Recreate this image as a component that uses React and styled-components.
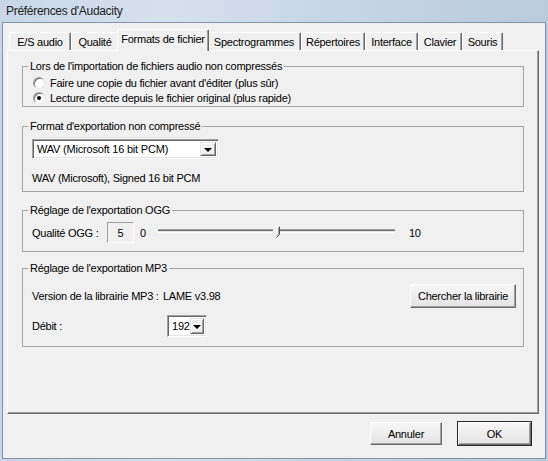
import styled, { createGlobalStyle } from "styled-components";

const GlobalStyle = createGlobalStyle`
  html, body {
    margin: 0;
    padding: 0;
    background: #bfcedd;
  }
  body {
    font-family: "Liberation Sans", Arial, sans-serif;
    font-size: 11px;
    letter-spacing: -0.25px;
    color: #000;
  }
`;

const StWindow = styled.div`
  width: 548px;
  height: 461px;
  box-sizing: border-box;
  display: flex;
  flex-direction: column;
  padding: 0 2px 2px 2px;
  background: linear-gradient(90deg, #c8d6e5 0%, #d6e1ec 30%, #c7d5e4 60%, #bccbdb 100%);
`;

const StTitleBar = styled.div`
  height: 22px;
  display: flex;
  align-items: center;
  padding-left: 4px;
  font-size: 12px;
  letter-spacing: -0.3px;
  color: #1e1e1e;
`;

const StClient = styled.div`
  flex: 1;
  display: flex;
  flex-direction: column;
  background: #f0f0f0;
  border: 1px solid #8393a4;
  padding: 6px 6px 0 4px;
  min-height: 0;
`;

const StTabStrip = styled.div`
  height: 21px;
  display: flex;
  align-items: flex-end;
  padding-left: 2px;
`;

const StTab = styled.div`
  box-sizing: border-box;
  width: ${(p) => p.$width}px;
  height: ${(p) => (p.$active ? 22 : 18)}px;
  margin: ${(p) => (p.$active ? "0 -2px -1px" : "0")};
  display: flex;
  align-items: center;
  justify-content: center;
  padding-bottom: ${(p) => (p.$active ? 3 : 0)}px;
  background: #f0f0f0;
  border-top: 1px solid #fff;
  border-left: 1px solid #fff;
  border-right: 1px solid #696969;
  box-shadow: inset -1px 0 #a0a0a0;
  border-radius: 2px 2px 0 0;
  position: ${(p) => (p.$active ? "relative" : "static")};
  z-index: ${(p) => (p.$active ? 1 : "auto")};
  white-space: nowrap;
`;

const StPanel = styled.div`
  flex: 1;
  display: flex;
  flex-direction: column;
  border: 1px solid;
  border-color: #fff #696969 #696969 #fff;
  box-shadow: inset -1px -1px #a0a0a0;
  padding: 9px 14px 0 14px;
`;

const StGroup = styled.fieldset`
  margin: ${(p) => p.$top}px 0 0;
  padding: ${(p) => p.$pad};
  border: 1px solid #a5a5a5;
  min-width: 0;
`;

const StLegend = styled.legend`
  padding: 0 2px;
  margin-left: -4px;
  line-height: 13px;
`;

const StRadioRow = styled.div`
  height: 15px;
  display: flex;
  align-items: center;
  gap: 5px;
  padding-left: 1px;
`;

const StRadio = styled.span`
  box-sizing: border-box;
  width: 12px;
  height: 12px;
  border-radius: 50%;
  border: 1px solid;
  border-color: #9a9a9a #e8e8e8 #e8e8e8 #9a9a9a;
  box-shadow: inset 1px 1px #777;
  background: #fff;
  display: flex;
  align-items: center;
  justify-content: center;

  &::after {
    content: "";
    width: 4px;
    height: 4px;
    border-radius: 50%;
    background: ${(p) => (p.$checked ? "#000" : "transparent")};
  }
`;

const StCombo = styled.div`
  box-sizing: border-box;
  width: ${(p) => p.$width}px;
  height: ${(p) => p.$height}px;
  display: flex;
  align-items: stretch;
  background: #fff;
  border: 1px solid;
  border-color: #a0a0a0 #fff #fff #a0a0a0;
  box-shadow: inset 1px 1px #696969, inset -1px -1px #e3e3e3;
  padding: 2px;
`;

const StComboText = styled.div`
  flex: 1;
  display: flex;
  align-items: center;
  padding-left: 2px;
  font-size: 11px;
  letter-spacing: -0.2px;
  white-space: nowrap;
`;

const StComboButton = styled.div`
  box-sizing: border-box;
  width: 16px;
  display: flex;
  align-items: center;
  justify-content: center;
  background: #f0f0f0;
  border: 1px solid;
  border-color: #e3e3e3 #696969 #696969 #e3e3e3;
  box-shadow: inset 1px 1px #fff, inset -1px -1px #a0a0a0;

  &::after {
    content: "";
    border-left: 4px solid transparent;
    border-right: 4px solid transparent;
    border-top: 4px solid #000;
    margin-top: 1px;
  }
`;

const StText = styled.div`
  line-height: 13px;
  margin-top: ${(p) => p.$top || 0}px;
`;

const StRow = styled.div`
  display: flex;
  align-items: center;
  height: ${(p) => p.$height}px;
  margin-top: ${(p) => p.$top || 0}px;
`;

const StLabel = styled.span`
  width: ${(p) => p.$width}px;
  flex-shrink: 0;
  white-space: nowrap;
`;

const StValueBox = styled.div`
  box-sizing: border-box;
  width: 27px;
  height: 21px;
  display: flex;
  align-items: center;
  justify-content: center;
  border: 1px solid;
  border-color: #a0a0a0 #fff #fff #a0a0a0;
`;

const StTick = styled.span`
  margin-left: ${(p) => p.$left}px;
`;

const StSlider = styled.div`
  position: relative;
  width: 237px;
  height: 21px;
  margin-left: 12px;
`;

const StTrack = styled.div`
  box-sizing: border-box;
  margin-top: 7px;
  height: 4px;
  border-top: 1px solid #a0a0a0;
  border-bottom: 1px solid #fff;
  background: #e6e6e6;
  box-shadow: inset 0 1px #6e6e6e;
`;

const StThumb = styled.svg`
  position: absolute;
  top: 4px;
`;

const StButton = styled.button`
  box-sizing: border-box;
  width: ${(p) => p.$width}px;
  height: ${(p) => p.$height}px;
  margin-left: ${(p) => (p.$push ? "auto" : "0")};
  padding: 0;
  font: inherit;
  font-size: 11px;
  letter-spacing: -0.25px;
  color: #000;
  background: linear-gradient(#f7f7f7, #e4e4e4);
  border: 1px solid;
  border-color: #fff #696969 #696969 #fff;
  box-shadow: ${(p) =>
    p.$default
      ? "0 0 0 1px #2b2b2b, inset -1px -1px #a0a0a0"
      : "inset -1px -1px #a0a0a0"};
`;

const StFooter = styled.div`
  display: flex;
  justify-content: flex-end;
  gap: 16px;
  padding: 8px 8px 13px 0;
`;

const tabs = [
  { label: "E/S audio", width: 62 },
  { label: "Qualité", width: 48 },
  { label: "Formats de fichier", width: 92, active: true },
  { label: "Spectrogrammes", width: 94 },
  { label: "Répertoires", width: 64 },
  { label: "Interface", width: 53 },
  { label: "Clavier", width: 44 },
  { label: "Souris", width: 41 },
];

function Thumb({ value, max }) {
  const left = Math.round((value / max) * 230);
  return (
    <StThumb width="7" height="12" viewBox="0 0 7 12" style={{ left }}>
      <path d="M0.5 0.5 H6.5 V8.5 L3.5 11.5 L0.5 8.5 Z" fill="#f0f0f0" />
      <path d="M0.5 8.5 V0.5 H6" fill="none" stroke="#fff" />
      <path d="M6.5 0.5 V8.5 L3.5 11.5" fill="none" stroke="#555" />
      <path d="M5.5 1.5 V8 L3.5 10" fill="none" stroke="#a0a0a0" />
    </StThumb>
  );
}

function App() {
  return (
    <>
      <GlobalStyle />
      <StWindow>
        <StTitleBar>Préférences d'Audacity</StTitleBar>
        <StClient>
          <StTabStrip>
            {tabs.map((t) => (
              <StTab key={t.label} $width={t.width} $active={t.active}>
                {t.label}
              </StTab>
            ))}
          </StTabStrip>
          <StPanel>
            <StGroup $top={0} $pad="2px 9px 1px">
              <StLegend>Lors de l'importation de fichiers audio non compressés</StLegend>
              <StRadioRow>
                <StRadio />
                Faire une copie du fichier avant d'éditer (plus sûr)
              </StRadioRow>
              <StRadioRow>
                <StRadio $checked />
                Lecture directe depuis le fichier original (plus rapide)
              </StRadioRow>
            </StGroup>

            <StGroup $top={13} $pad="6px 9px 6px">
              <StLegend>Format d'exportation non compressé</StLegend>
              <StCombo $width={187} $height={20}>
                <StComboText>WAV (Microsoft 16 bit PCM)</StComboText>
                <StComboButton />
              </StCombo>
              <StText $top={13}>WAV (Microsoft), Signed 16 bit PCM</StText>
            </StGroup>

            <StGroup $top={12} $pad="5px 9px 8px">
              <StLegend>Réglage de l'exportation OGG</StLegend>
              <StRow $height={21}>
                <StLabel $width={75}>Qualité OGG :</StLabel>
                <StValueBox>5</StValueBox>
                <StTick $left={6}>0</StTick>
                <StSlider>
                  <StTrack />
                  <Thumb value={5} max={10} />
                </StSlider>
                <StTick $left={14}>10</StTick>
              </StRow>
            </StGroup>

            <StGroup $top={10} $pad="0 7px 9px 9px">
              <StLegend>Réglage de l'exportation MP3</StLegend>
              <StRow $height={24} $top={9}>
                <StLabel $width={131}>Version de la librairie MP3 :</StLabel>
                <span>LAME v3.98</span>
                <StButton $width={106} $height={24} $push>
                  Chercher la librairie
                </StButton>
              </StRow>
              <StRow $height={22} $top={7}>
                <StLabel $width={135}>Débit :</StLabel>
                <StCombo $width={40} $height={22}>
                  <StComboText>192</StComboText>
                  <StComboButton />
                </StCombo>
              </StRow>
            </StGroup>
          </StPanel>
          <StFooter>
            <StButton $width={72} $height={23}>Annuler</StButton>
            <StButton $width={73} $height={23} $default>OK</StButton>
          </StFooter>
        </StClient>
      </StWindow>
    </>
  );
}

export default App;
